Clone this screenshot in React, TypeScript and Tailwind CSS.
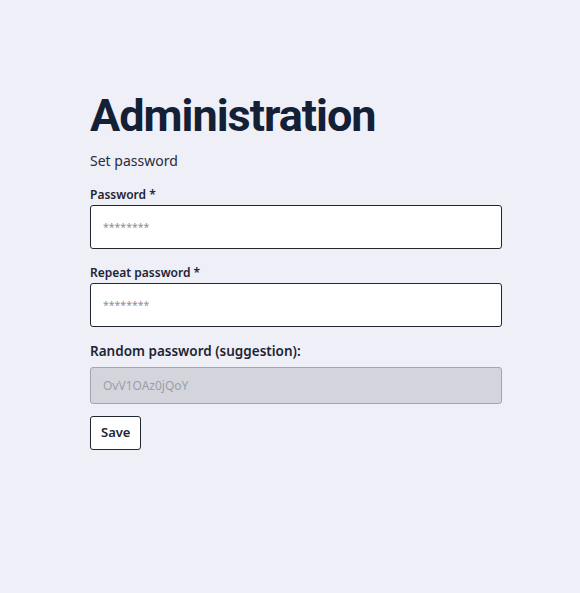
import React from "react";

const font = { fontFamily: '"Noto Sans", "Open Sans", sans-serif' };
const headFont = { fontFamily: 'Roboto, "Noto Sans", sans-serif' };

const App: React.FC = () => {
  return (
    <div className="min-h-[593px] w-full bg-[#efeff7] text-[#1b2437]" style={font}>
      <div className="ml-[90px] w-[412px] pt-[88px] flex flex-col">
        <h1 className="text-[45px] leading-[55px] font-bold text-[#142035] tracking-[-1px]" style={headFont}>
          Administration
        </h1>
        <p className="mt-[6px] text-[14px] leading-6 text-[#262c3a]">Set password</p>

        <label className="mt-3 text-[12px] leading-5 font-semibold text-[#1d2535]">Password *</label>
        <input
          type="password"
          placeholder="********"
          className="h-[44px] w-full rounded-[3px] border border-[#22262e] bg-white px-3 text-[10.5px] placeholder:text-[#8b8f98] outline-none"
        />

        <label className="mt-[14px] text-[12px] leading-5 font-semibold text-[#1d2535]">Repeat password *</label>
        <input
          type="password"
          placeholder="********"
          className="h-[44px] w-full rounded-[3px] border border-[#22262e] bg-white px-3 text-[10.5px] placeholder:text-[#8b8f98] outline-none"
        />

        <label className="mt-[14px] mb-[6px] text-[13.5px] leading-5 font-semibold text-[#1d2535]">
          Random password (suggestion):
        </label>
        <input
          type="text"
          disabled
          value="OvV1OAz0jQoY"
          readOnly
          className="h-[37px] w-full rounded-[3px] border border-[#a3a6ae] bg-[#d4d5dc] px-3 text-[12px] text-[#9a9ea8] outline-none"
        />

        <div className="mt-3">
          <button className="h-[34px] rounded-[3px] border border-[#22262e] bg-white px-[10px] text-[13px] font-semibold text-[#1d2535]">
            Save
          </button>
        </div>
      </div>
    </div>
  );
};

export default App;
